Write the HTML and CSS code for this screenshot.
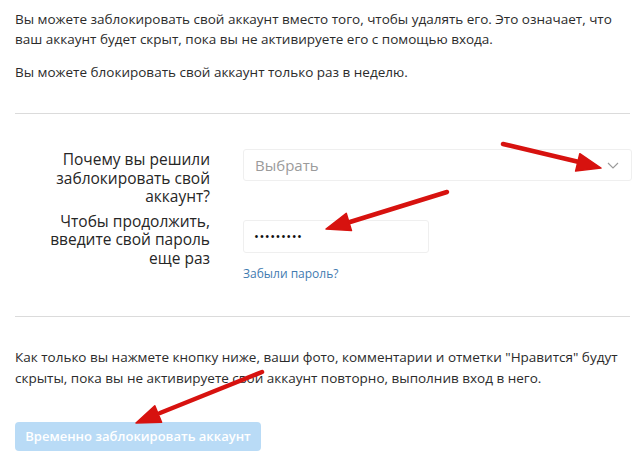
FILE: index.html
```html
<!DOCTYPE html>
<html lang="ru">
<head>
  <meta charset="UTF-8" />
  <title>Временно заблокировать аккаунт</title>
  <meta name="viewport" content="width=device-width, initial-scale=1.0" />
  <link rel="stylesheet" href="styles.css">
</head>
<body>

<div id="page">
  <p class="note">Вы можете заблокировать свой аккаунт вместо того, чтобы удалять его. Это означает, что ваш аккаунт будет скрыт, пока вы не активируете его с помощью входа.</p>
  <p class="note">Вы можете блокировать свой аккаунт только раз в неделю.</p>

  <div class="form-block">
    <div class="row">
      <label class="row-label" for="reason">Почему вы решили заблокировать свой аккаунт?</label>
      <div class="field">
        <div class="select" id="reason">
          <span>Выбрать</span>
          <svg class="chevron" width="12" height="7" viewBox="0 0 12 7"><path d="M1 1l5 5 5-5" fill="none" stroke="#9a9a9a" stroke-width="1.1"/></svg>
        </div>
      </div>
    </div>

    <div class="row row-pass">
      <label class="row-label" for="pass">Чтобы продолжить, введите свой пароль еще раз</label>
      <div class="field">
        <div class="password" id="pass">•••••••••</div>
        <a class="forgot" href="#">Забыли пароль?</a>
      </div>
    </div>
  </div>

  <p class="note final">Как только вы нажмете кнопку ниже, ваши фото, комментарии и отметки "Нравится" будут скрыты, пока вы не активируете свой аккаунт повторно, выполнив вход в него.</p>

  <button class="btn" disabled>Временно заблокировать аккаунт</button>
</div>

<!-- red arrows drawn over the screenshot -->
<svg id="arrows" width="639" height="465" viewBox="0 0 639 465">
  <g stroke="#d7120f" stroke-width="4.5" stroke-linecap="round" fill="#d7120f">
    <line x1="503" y1="144" x2="579" y2="162"/>
    <line x1="447" y1="192" x2="350" y2="222"/>
    <line x1="262" y1="372" x2="160" y2="413"/>
  </g>
  <g fill="#d7120f" stroke="#d7120f" stroke-width="1.5" stroke-linejoin="round">
    <polygon points="601,168 575.6,171.1 579.8,153.7"/>
    <polygon points="326,229 346.3,213.4 351.5,230.6"/>
    <polygon points="136,423 154.8,405.7 161.6,422.3"/>
  </g>
</svg>

</body>
</html>
```

FILE: styles.css
```css
html, body {
  margin: 0; padding: 0;
  background: #fff;
  font-family: "Open Sans", "Noto Sans", sans-serif;
  color: #2b2b2b;
}

#page {
  position: relative;
  width: 639px; height: 465px;
  box-sizing: border-box;
  padding: 9px 9px 0 15px;
  overflow: hidden;
}

.note {
  margin: 0 0 13px;
  font-size: 13.5px;
  line-height: 20px;
}

.form-block {
  margin-top: 31px;
  padding: 35px 0 34px;
  border-top: 1px solid #dbdbdb;
  border-bottom: 1px solid #dbdbdb;
}

.row {
  display: flex;
  align-items: flex-start;
  gap: 33px;
}

.row-pass { margin-top: 5px; }

.row-label {
  width: 172px;
  margin-left: 23px;
  flex: none;
  text-align: right;
  font-size: 15.5px;
  line-height: 18.5px;
  color: #262626;
  padding-top: 1px;
}

.field { flex: 1; }

.select {
  height: 32px;
  box-sizing: border-box;
  border: 1px solid #efefef;
  border-radius: 3px;
  display: flex;
  align-items: center;
  justify-content: space-between;
  padding: 0 12px 0 11px;
  font-size: 15px;
  color: #9b9b9b;
  margin-right: -2px;
}

.password {
  width: 186px; height: 33px;
  box-sizing: border-box;
  margin-top: 9px;
  border: 1px solid #efefef;
  border-radius: 3px;
  padding: 0 10px;
  font-size: 13px;
  line-height: 31px;
  letter-spacing: 0.5px;
  color: #111;
}

.forgot {
  display: block;
  margin-top: 13px;
  font-size: 12px;
  line-height: 16px;
  color: #3f7bb0;
  text-decoration: none;
}

.final {
  margin-top: 30px;
  line-height: 21px;
  margin-bottom: 0;
}

.btn {
  margin-top: 33px;
  width: 246px; height: 29px;
  border: none;
  border-radius: 4px;
  background: #b9dbf6;
  color: #fff;
  font-family: inherit;
  font-size: 13px;
  font-weight: 600;
  padding: 0;
}

#arrows {
  position: absolute;
  top: 0; left: 0;
  pointer-events: none;
}
```
